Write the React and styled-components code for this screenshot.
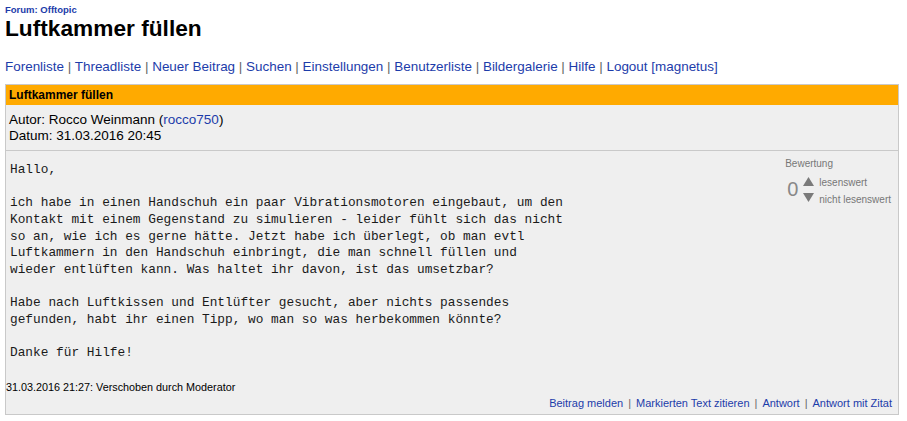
import React from 'react';
import styled, { createGlobalStyle } from 'styled-components';

const LINK = '#1c3caa';

const GlobalStyle = createGlobalStyle`
  html, body { margin: 0; background: #fff; }
  body {
    padding: 4px 8px 0 5px;
    font-family: "Liberation Sans", Arial, sans-serif;
    color: #000;
  }
  a { color: ${LINK}; text-decoration: none; }
`;

const ForumLabel = styled.div`
  font-size: 9.5px;
  font-weight: bold;
  line-height: 11px;
`;

const Title = styled.h1`
  margin: 0;
  font-size: 22.7px;
  font-weight: bold;
  line-height: 26px;
`;

const Nav = styled.nav`
  margin-top: 18px;
  font-size: 13.45px;
  line-height: 15px;
`;

const Sep = styled.span`
  color: #666;
  margin: 0 ${(p) => p.$gap || 0}px;
`;

const Post = styled.div`
  margin-top: 10px;
  border: 1px solid #c9c9c9;
  background: #efefef;
`;

const PostHeader = styled.div`
  background: #ffaa00;
  font-size: 12px;
  font-weight: bold;
  height: 20px;
  line-height: 20px;
  padding-left: 3px;
`;

const Meta = styled.div`
  padding: 7px 3px 6px;
  font-size: 13.5px;
  line-height: 16px;
  border-bottom: 1px solid #c9c9c9;
`;

const Body = styled.div`
  display: flex;
  justify-content: space-between;
  align-items: flex-start;
  padding: 0 7px 0 4px;
`;

const MessageText = styled.div`
  margin-top: 11px;
  font-family: "Liberation Mono", "Courier New", monospace;
  font-size: 12.8px;
  line-height: 16.67px;
  white-space: pre-wrap;
  color: #1a1a1a;
`;

const Rating = styled.div`
  margin-top: 7px;
  color: #777;
  font-size: 10px;
  line-height: 11px;
`;

const RatingGrid = styled.div`
  display: grid;
  grid-template-columns: auto auto auto;
  grid-template-rows: 16px 16px;
  align-items: center;
  margin-top: 4px;
`;

const Score = styled.div`
  grid-row: 1 / span 2;
  font-size: 20px;
  line-height: 20px;
  color: #888;
  padding-left: 2px;
  margin-right: 5px;
`;

const Arrow = styled.svg`
  display: block;
  width: 11px;
  height: 9px;
  margin-right: 5px;
`;

const RatingLabel = styled.div`
  padding-top: ${(p) => (p.$down ? 4 : 3)}px;
`;

const MoveNote = styled.div`
  margin-top: 19px;
  font-size: 10.8px;
  line-height: 13px;
`;

const Actions = styled.div`
  display: flex;
  justify-content: flex-end;
  padding: 3px 6px 4px 0;
  font-size: 11px;
  line-height: 13px;
`;

const msg = `Hallo,

ich habe in einen Handschuh ein paar Vibrationsmotoren eingebaut, um den
Kontakt mit einem Gegenstand zu simulieren - leider fühlt sich das nicht
so an, wie ich es gerne hätte. Jetzt habe ich überlegt, ob man evtl
Luftkammern in den Handschuh einbringt, die man schnell füllen und
wieder entlüften kann. Was haltet ihr davon, ist das umsetzbar?

Habe nach Luftkissen und Entlüfter gesucht, aber nichts passendes
gefunden, habt ihr einen Tipp, wo man so was herbekommen könnte?

Danke für Hilfe!`;

const navItems = [
  'Forenliste',
  'Threadliste',
  'Neuer Beitrag',
  'Suchen',
  'Einstellungen',
  'Benutzerliste',
  'Bildergalerie',
  'Hilfe',
  'Logout [magnetus]',
];

const actionItems = ['Beitrag melden', 'Markierten Text zitieren', 'Antwort', 'Antwort mit Zitat'];

export default function App() {
  return (
    <>
      <GlobalStyle />
      <ForumLabel>
        <a href="#">Forum: Offtopic</a>
      </ForumLabel>
      <Title>Luftkammer füllen</Title>
      <Nav>
        {navItems.map((item, i) => (
          <React.Fragment key={item}>
            {i > 0 && <Sep> | </Sep>}
            <a href="#">{item}</a>
          </React.Fragment>
        ))}
      </Nav>
      <Post>
        <PostHeader>Luftkammer füllen</PostHeader>
        <Meta>
          Autor: Rocco Weinmann (<a href="#">rocco750</a>)
          <br />
          Datum: 31.03.2016 20:45
        </Meta>
        <Body>
          <MessageText>{msg}</MessageText>
          <Rating>
            Bewertung
            <RatingGrid>
              <Score>0</Score>
              <Arrow viewBox="0 0 11 9">
                <polygon points="5.5,0 11,9 0,9" fill="#7a7a7a" />
              </Arrow>
              <RatingLabel>lesenswert</RatingLabel>
              <Arrow viewBox="0 0 11 9">
                <polygon points="0,0 11,0 5.5,9" fill="#7a7a7a" />
              </Arrow>
              <RatingLabel $down>nicht lesenswert</RatingLabel>
            </RatingGrid>
          </Rating>
        </Body>
        <MoveNote>31.03.2016 21:27: Verschoben durch Moderator</MoveNote>
        <Actions>
          {actionItems.map((item, i) => (
            <React.Fragment key={item}>
              {i > 0 && <Sep $gap={5}> | </Sep>}
              <a href="#">{item}</a>
            </React.Fragment>
          ))}
        </Actions>
      </Post>
    </>
  );
}
